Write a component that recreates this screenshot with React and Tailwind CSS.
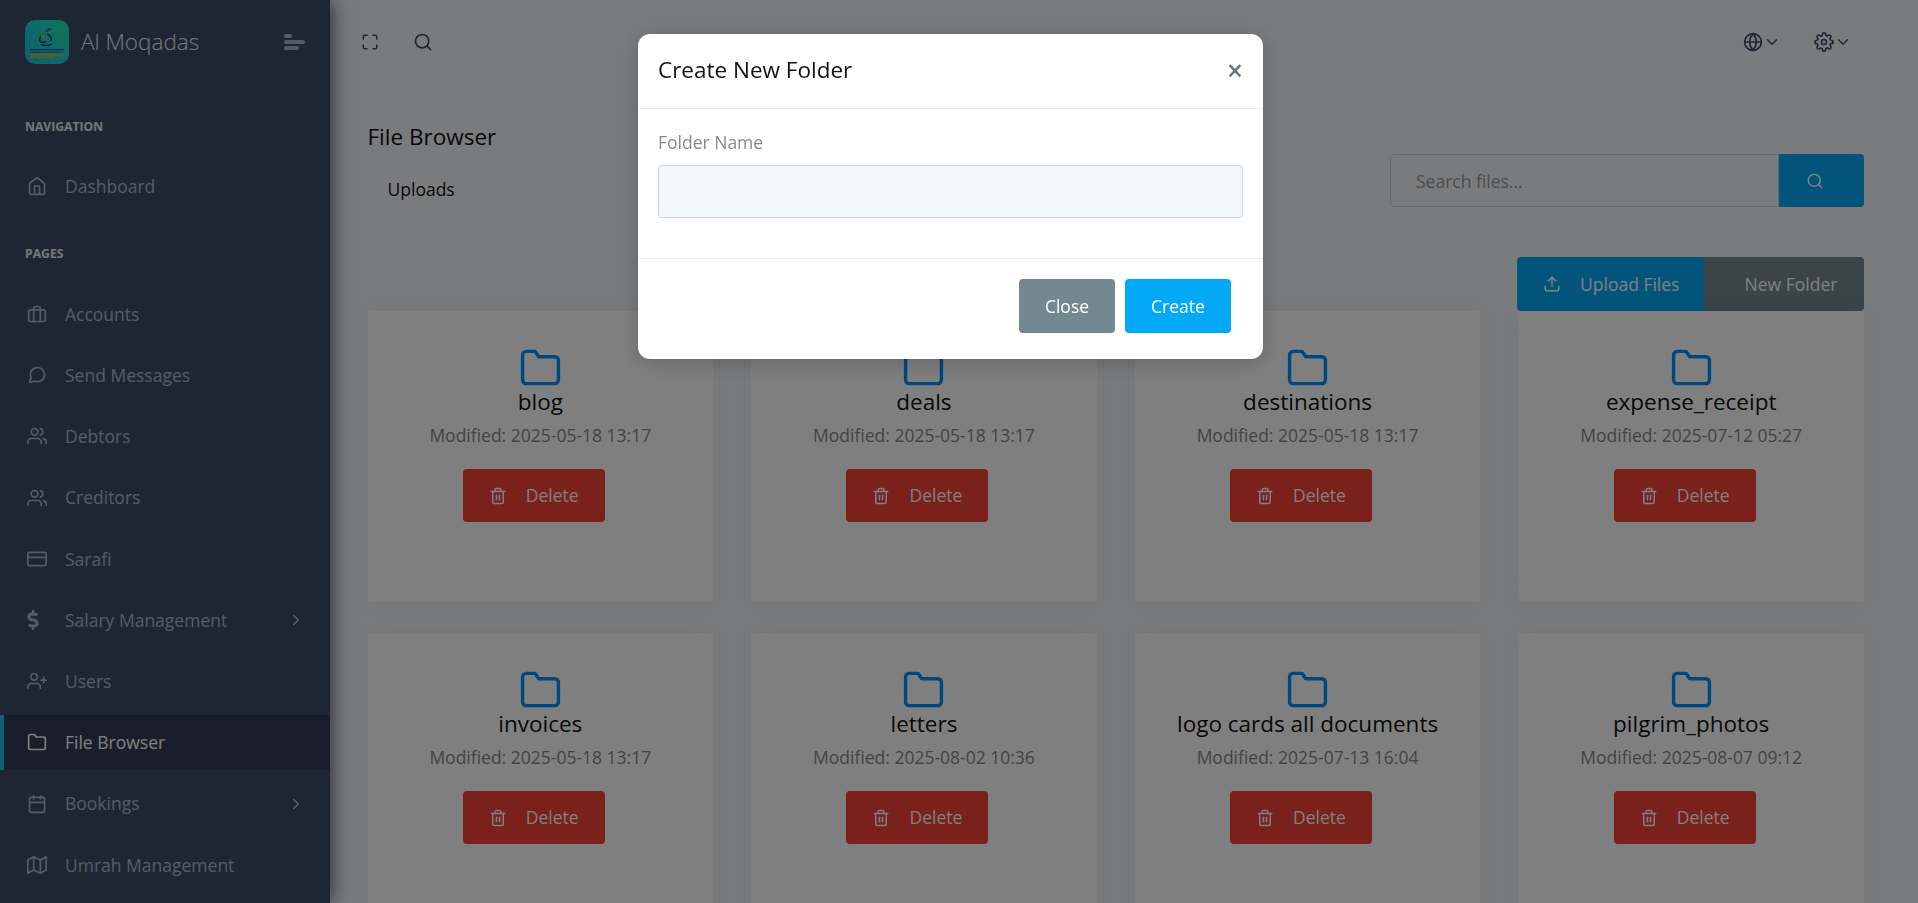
import React from "react";
import {
  FiHome,
  FiBriefcase,
  FiMessageCircle,
  FiUsers,
  FiCreditCard,
  FiUserPlus,
  FiFolder,
  FiCalendar,
  FiMap,
  FiChevronRight,
  FiChevronDown,
  FiMaximize,
  FiSearch,
  FiGlobe,
  FiSettings,
  FiUpload,
  FiTrash2,
} from "react-icons/fi";
import { FaDollarSign } from "react-icons/fa";

const PAGES = [
  { label: "Accounts", icon: FiBriefcase },
  { label: "Send Messages", icon: FiMessageCircle },
  { label: "Debtors", icon: FiUsers },
  { label: "Creditors", icon: FiUsers },
  { label: "Sarafi", icon: FiCreditCard },
  { label: "Salary Management", icon: FaDollarSign, arrow: true },
  { label: "Users", icon: FiUserPlus },
  { label: "File Browser", icon: FiFolder, active: true },
  { label: "Bookings", icon: FiCalendar, arrow: true },
  { label: "Umrah Management", icon: FiMap },
];

const FOLDERS = [
  { name: "blog", modified: "2025-05-18 13:17" },
  { name: "deals", modified: "2025-05-18 13:17" },
  { name: "destinations", modified: "2025-05-18 13:17" },
  { name: "expense_receipt", modified: "2025-07-12 05:27" },
  { name: "invoices", modified: "2025-05-18 13:17" },
  { name: "letters", modified: "2025-08-02 10:36" },
  { name: "logo cards all documents", modified: "2025-07-13 16:04" },
  { name: "pilgrim_photos", modified: "2025-08-07 09:12" },
];

function Logo() {
  return (
    <svg width="44" height="44" viewBox="0 0 44 44" className="shrink-0">
      <defs>
        <linearGradient id="logoBg" x1="1" y1="0" x2="0" y2="1">
          <stop offset="0" stopColor="#1de9b6" />
          <stop offset="1" stopColor="#1dc4e9" />
        </linearGradient>
      </defs>
      <rect width="44" height="44" rx="10" fill="url(#logoBg)" />
      <path
        d="M26 9c-2 0-4 1-4 3m-4 3c-3 1-4 4-3 6s5 2 6 0m1-7c3 1 5 4 4 7m-10 3c2 2 8 2 11 0"
        fill="none"
        stroke="#1c3f7a"
        strokeWidth="1.5"
      />
      <rect x="16" y="15" width="3" height="3" fill="#f5a623" />
      <rect x="5" y="29" width="34" height="1.2" fill="#1c3f7a" opacity="0.8" />
      <rect x="6" y="31.5" width="32" height="1.2" fill="#1c3f7a" opacity="0.6" />
      <rect x="5" y="34" width="33" height="1.2" fill="#f5b81f" />
      <rect x="5" y="36.5" width="24" height="1.5" fill="#f5a623" />
    </svg>
  );
}

function NavItem({ label, icon: Icon, arrow, active }) {
  return (
    <div
      className={`flex items-center h-[55px] mb-[6.2px] pl-[27px] pr-[25px] text-[17.5px] ${
        active ? "bg-[#333f54] text-white relative" : "text-[#a9b7d0]"
      }`}
    >
      {active && <span className="absolute left-0 top-0 bottom-0 w-[4px] bg-[#1dc4e9]" />}
      <span className="w-[38px] shrink-0">
        {Icon === FaDollarSign ? <Icon size={20} className="-ml-[4px]" /> : <Icon size={20} />}
      </span>
      <span className="flex-1">{label}</span>
      {arrow && <FiChevronRight size={18} />}
    </div>
  );
}

function Sidebar() {
  return (
    <aside className="relative z-10 w-[330px] shrink-0 h-full overflow-hidden bg-[#3f4d67] shadow-[1px_0_20px_0_#3f4d67]">
      <div className="flex items-center h-[84px] pl-[25px] pr-[25px]">
        <Logo />
        <span className="ml-3 flex-1 text-[22.5px] font-light text-[#e9edf5]">Al Moqadas</span>
        <div className="flex flex-col gap-[2px] w-[21px]">
          <span className="h-[4px] w-[8px] rounded-sm bg-[#a9b7d0]" />
          <span className="h-[4px] w-[21px] rounded-sm bg-[#a9b7d0]" />
          <span className="h-[4px] w-[15px] rounded-sm bg-[#a9b7d0]" />
        </div>
      </div>
      <div className="mt-[33px] pl-[25px] h-5 leading-5 text-[12.2px] font-bold text-[#e8edf7]">NAVIGATION</div>
      <div className="mt-[21.5px]">
        <NavItem label="Dashboard" icon={FiHome} />
      </div>
      <div className="mt-[30px] pl-[25px] h-5 leading-5 text-[12.2px] font-bold text-[#e8edf7]">PAGES</div>
      <div className="mt-[23px]">
        {PAGES.map((p) => (
          <NavItem key={p.label} {...p} />
        ))}
      </div>
    </aside>
  );
}

function FolderCard({ name, modified }) {
  return (
    <div className="flex flex-col items-center h-[291px] pt-[35px] bg-white shadow-[0_1px_20px_0_rgba(69,90,100,0.08)]">
      <FiFolder size={43} strokeWidth={1.9} className="text-[#008cff]" />
      <div className="text-[22.5px] leading-[28px] -mt-[1px] text-[#111]">{name}</div>
      <div className="mt-[7px] text-[17.5px] leading-[24px] text-[#888]">Modified: {modified}</div>
      <button className="flex items-center mt-[22px] mr-[13px] h-[53px] w-[142px] pl-[26px] rounded-[4px] bg-[#f44236] text-white text-[17.5px]">
        <FiTrash2 size={18} />
        <span className="ml-[19px]">Delete</span>
      </button>
    </div>
  );
}

function Modal() {
  return (
    <div className="fixed inset-0 z-20 bg-black/50">
      <div className="absolute left-[638px] top-[34px] w-[625px] h-[325px] rounded-[12px] bg-white text-[17.5px] shadow-[0_4px_20px_rgba(0,0,0,0.2)]">
        <div className="flex items-center justify-between h-[75px] pb-[2px] pl-[20px] pr-[20px] border-b border-[#e9ecef]">
          <h5 className="text-[22.5px] text-[#111]">Create New Folder</h5>
          <span className="text-[28px] leading-none font-semibold text-[#6c757d]">×</span>
        </div>
        <div className="h-[150px] px-[20px] border-b border-[#e9ecef]">
          <div className="pt-[21px] leading-[24px] text-[#888]">Folder Name</div>
          <input className="block mt-[11px] w-[585px] h-[53px] rounded-[4px] border border-[#ced4da] bg-[#f4f7fa]" />
        </div>
        <div className="flex justify-end gap-[10px] pt-[20px] pr-[32px]">
          <button className="h-[54px] w-[96px] rounded-[4px] bg-[#748892] text-white">Close</button>
          <button className="h-[54px] w-[106px] rounded-[4px] bg-[#04a9f5] text-white">Create</button>
        </div>
      </div>
    </div>
  );
}

export default function App() {
  return (
    <div className="flex h-screen overflow-hidden bg-[#f4f7fa] font-['Open_Sans',sans-serif] text-[17.5px]">
      <Sidebar />
      <main className="flex-1 min-w-0 pl-[37.5px] pr-[54px]">
        {/* top bar */}
        <div className="flex items-center justify-between h-[84px] text-[#3f4d67]">
          <div className="flex items-center">
            <FiMaximize size={18} className="-ml-[7px]" />
            <FiSearch size={20} className="ml-[34px]" />
          </div>
          <div className="flex items-center mr-[12px]">
            <FiGlobe size={20} />
            <FiChevronDown size={18} />
            <FiSettings size={20} className="ml-[33px]" />
            <FiChevronDown size={18} />
          </div>
        </div>

        {/* title + search */}
        <div className="flex items-start justify-between mt-[38px]">
          <div>
            <h4 className="text-[22.5px] leading-[30px] text-[#111]">File Browser</h4>
            <div className="mt-[25px] ml-[20px] leading-[25px] text-[#111]">Uploads</div>
          </div>
          <div className="flex mt-[32px] h-[53px] w-[474px]">
            <div className="flex items-center flex-1 pl-[25px] pt-[1px] rounded-l-[4px] border border-[#ced4da] text-[#999]">
              Search files...
            </div>
            <div className="flex items-center justify-center w-[85px] pr-[14px] rounded-r-[4px] bg-[#04a9f5] text-white">
              <FiSearch size={18} />
            </div>
          </div>
        </div>

        {/* actions */}
        <div className="flex justify-end mt-[50px]">
          <button className="flex items-center h-[54px] w-[187px] pl-[26px] rounded-l-[4px] bg-[#04a9f5] text-white">
            <FiUpload size={18} />
            <span className="ml-[19px]">Upload Files</span>
          </button>
          <button className="h-[54px] w-[160px] pl-[14px] rounded-r-[4px] bg-[#748892] text-white">New Folder</button>
        </div>

        {/* folders */}
        <div className="grid grid-cols-4 gap-x-[38px] gap-y-[31px]">
          {FOLDERS.map((f) => (
            <FolderCard key={f.name} {...f} />
          ))}
        </div>
      </main>
      <Modal />
    </div>
  );
}
